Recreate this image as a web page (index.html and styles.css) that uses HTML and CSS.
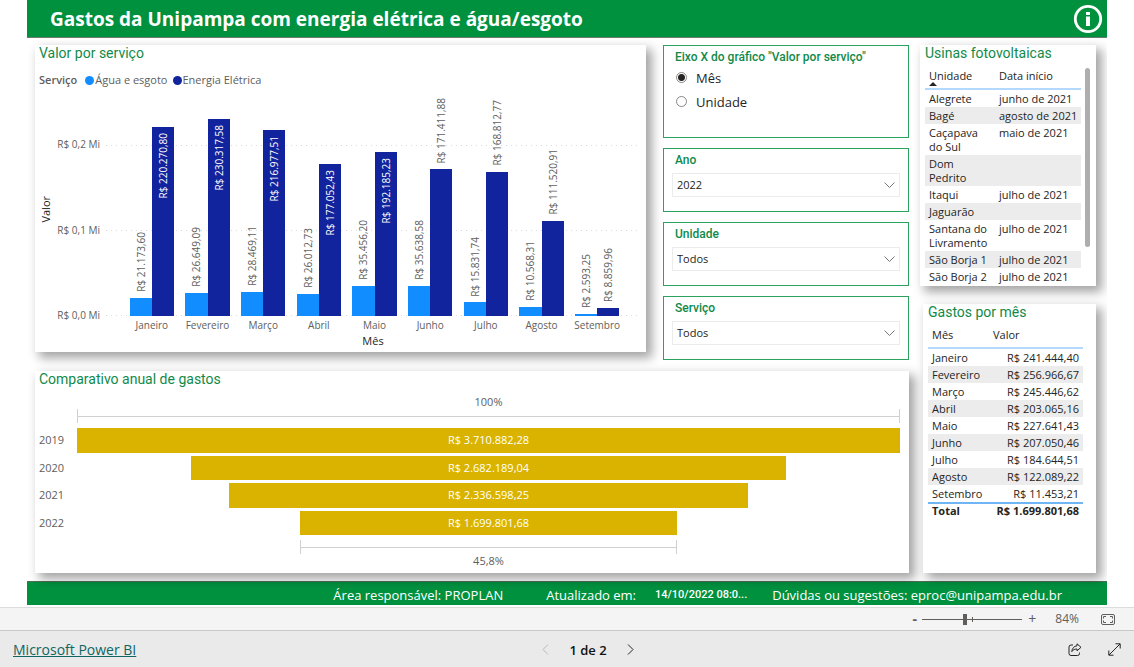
FILE: index.html
```html
<!DOCTYPE html>
<html lang="pt-BR">
<head>
<meta charset="utf-8">
<title>Gastos da Unipampa</title>
<link rel="stylesheet" href="styles.css">
</head>
<body>
<main class="report">
  <header class="report-header">
    <h1>Gastos da Unipampa com energia elétrica e água/esgoto</h1>
    <button class="info" type="button" aria-label="Informações">
      <svg width="30" height="30" viewBox="0 0 30 30"><circle cx="15" cy="15" r="12.7" fill="none" stroke="#fff" stroke-width="2.8"/><path d="M13 8h4v3h-4zM13 12.5h4V22h-4z" fill="#fff"/></svg>
    </button>
  </header>

  <div class="canvas">
    <div class="main-col">
      <div class="top-row">
        <section class="card chart-card">
          <h2>Valor por serviço</h2>
          <div class="legend"><b>Serviço</b><span class="key water">Água e esgoto</span><span class="key power">Energia Elétrica</span></div>
          <div class="chart">
            <div class="y-title"><span class="vertical">Valor</span></div>
            <div class="y-axis"><span>R$ 0,2 Mi</span><span>R$ 0,1 Mi</span><span>R$ 0,0 Mi</span></div>
            <div class="plot" id="plot"></div>
            <div class="x-axis" id="months"></div>
            <div class="x-title">Mês</div>
          </div>
        </section>

        <div class="filters">
          <fieldset class="filter axis-filter">
            <legend>Eixo X do gráfico "Valor por serviço"</legend>
            <label><input type="radio" name="eixo" checked>Mês</label>
            <label><input type="radio" name="eixo">Unidade</label>
          </fieldset>
          <div class="filter">
            <label for="ano">Ano</label>
            <div class="select"><select id="ano"><option>2022</option></select><svg width="11" height="7" viewBox="0 0 11 7"><path d="M.5.5l5 5 5-5"/></svg></div>
          </div>
          <div class="filter">
            <label for="unidade">Unidade</label>
            <div class="select"><select id="unidade"><option>Todos</option></select><svg width="11" height="7" viewBox="0 0 11 7"><path d="M.5.5l5 5 5-5"/></svg></div>
          </div>
          <div class="filter">
            <label for="servico">Serviço</label>
            <div class="select"><select id="servico"><option>Todos</option></select><svg width="11" height="7" viewBox="0 0 11 7"><path d="M.5.5l5 5 5-5"/></svg></div>
          </div>
        </div>
      </div>

      <section class="card funnel-card">
        <h2>Comparativo anual de gastos</h2>
        <div class="funnel">
          <div class="range">100%</div>
          <div class="bracket"></div>
          <ul class="years"><li>2019</li><li>2020</li><li>2021</li><li>2022</li></ul>
          <div class="bars">
            <div style="width:100%">R$ 3.710.882,28</div>
            <div style="width:72.28%">R$ 2.682.189,04</div>
            <div style="width:62.97%">R$ 2.336.598,25</div>
            <div style="width:45.8%">R$ 1.699.801,68</div>
          </div>
          <div class="bracket" style="width:45.8%"></div>
          <div class="range">45,8%</div>
        </div>
      </section>
    </div>

    <div class="side-col">
      <section class="card plants-card">
        <h2>Usinas fotovoltaicas</h2>
        <div class="scroller">
          <table class="plants">
            <thead><tr><th>Unidade<i class="sort"></i></th><th>Data início</th></tr></thead>
            <tbody>
              <tr><td>Alegrete</td><td>junho de 2021</td></tr>
              <tr><td>Bagé</td><td>agosto de 2021</td></tr>
              <tr><td>Caçapava do Sul</td><td>maio de 2021</td></tr>
              <tr><td>Dom Pedrito</td><td></td></tr>
              <tr><td>Itaqui</td><td>julho de 2021</td></tr>
              <tr><td>Jaguarão</td><td></td></tr>
              <tr><td>Santana do Livramento</td><td>julho de 2021</td></tr>
              <tr><td>São Borja 1</td><td>julho de 2021</td></tr>
              <tr><td>São Borja 2</td><td>julho de 2021</td></tr>
            </tbody>
          </table>
          <div class="thumb"></div>
        </div>
      </section>

      <section class="card months-card">
        <h2>Gastos por mês</h2>
        <table class="spend">
          <thead><tr><th>Mês</th><th>Valor</th></tr></thead>
          <tbody>
            <tr><td>Janeiro</td><td>R$ 241.444,40</td></tr>
            <tr><td>Fevereiro</td><td>R$ 256.966,67</td></tr>
            <tr><td>Março</td><td>R$ 245.446,62</td></tr>
            <tr><td>Abril</td><td>R$ 203.065,16</td></tr>
            <tr><td>Maio</td><td>R$ 227.641,43</td></tr>
            <tr><td>Junho</td><td>R$ 207.050,46</td></tr>
            <tr><td>Julho</td><td>R$ 184.644,51</td></tr>
            <tr><td>Agosto</td><td>R$ 122.089,22</td></tr>
            <tr><td>Setembro</td><td>R$ 11.453,21</td></tr>
          </tbody>
          <tfoot><tr><td>Total</td><td>R$ 1.699.801,68</td></tr></tfoot>
        </table>
      </section>
    </div>
  </div>

  <footer class="report-footer">
    <span>Área responsável: PROPLAN</span>
    <span class="updated">Atualizado em:</span>
    <b>14/10/2022 08:0...</b>
    <span>Dúvidas ou sugestões: eproc@unipampa.edu.br</span>
  </footer>
</main>

<div class="zoom-bar">
  <button class="minus" type="button" aria-label="Diminuir zoom">-</button>
  <input type="range" min="0" max="100" value="42" aria-label="Zoom">
  <button type="button" aria-label="Aumentar zoom">+</button>
  <span class="percent">84%</span>
  <button class="fit" type="button" aria-label="Ajustar à página">
    <svg width="14" height="11" viewBox="0 0 14 11"><rect x=".5" y=".5" width="13" height="10" rx="1.5"/><path d="M5 2.5H2.5V4.500M9 2.5h2.500V4.500M5 8.500H2.500V6.500M9 8.500h2.500V6.500"/></svg>
  </button>
</div>

<nav class="page-bar">
  <a href="#">Microsoft Power BI</a>
  <div class="pager">
    <button type="button" class="off" aria-label="Anterior"><svg width="7" height="11" viewBox="0 0 7 11"><path d="M6 .5l-5 5 5 5"/></svg></button>
    <span>1 de 2</span>
    <button type="button" aria-label="Próxima"><svg width="7" height="11" viewBox="0 0 7 11"><path d="M1 .5l5 5-5 5"/></svg></button>
  </div>
  <div class="tools">
    <button type="button" aria-label="Compartilhar"><svg width="14" height="13" viewBox="0 0 14 13"><path d="M5 2H3a2 2 0 0 0-2 2v6.500a2 2 0 0 0 2 2h6.500a2 2 0 0 0 2-2V9.500"/><path d="M9 .8l4 3.500-4 3.500V6C6.500 6 5 6.800 3.800 8.600 4 5.500 6 3 9 2.800z"/></svg></button>
    <button type="button" aria-label="Tela cheia"><svg width="13" height="13" viewBox="0 0 13 13"><path d="M1 12L12 1M7.500.8h4.700V5.500M.8 7.500v4.700h4.700"/></svg></button>
  </div>
</nav>
<script src="chart.js"></script>
</body>
</html>
```
FILE: styles.css
```css
* { box-sizing: border-box; }
body {
  margin: 0;
  min-height: 100vh;
  display: flex;
  flex-direction: column;
  background: #fff;
  color: #252423;
  font: 11px/14px "Open Sans", "Noto Sans", sans-serif;
}
h1, h2, ul, fieldset { margin: 0; padding: 0; }
ul { list-style: none; }
button { border: 0; padding: 0; background: none; color: inherit; font: inherit; display: flex; align-items: center; justify-content: center; }
svg { display: block; }

.report { margin: 0 27px; flex: 1; overflow: hidden; }
.report-header {
  display: flex; align-items: center; justify-content: space-between;
  height: 38px; padding: 0 4px 0 23px;
  background: #00913f; border-bottom: 1px solid #6d7a6f; color: #fff;
}
h1 { font-size: 19px; line-height: 24px; font-weight: 700; }
.canvas {
  position: relative; z-index: 1;
  display: grid; grid-template-columns: minmax(0, 1fr) 176px; gap: 11px;
  padding: 7px 11px 8px 8px;
}
.main-col, .side-col { display: flex; flex-direction: column; min-width: 0; }
.main-col { gap: 11px; }
.side-col { gap: 18px; }
.top-row { display: flex; gap: 17px; align-items: flex-start; }
.card { background: #fff; box-shadow: 5px 5px 10px 1px rgba(0, 0, 0, .36); }
h2 { font: 400 14px/16px Roboto, sans-serif; color: #118a49; }

/* column chart */
.chart-card { flex: 1; min-width: 0; padding: 0 6px 3px 4px; }
.legend { display: flex; align-items: center; margin-top: 12px; color: #605e5c; }
.legend b { font-weight: 600; margin-right: 8px; }
.key { display: flex; align-items: center; margin-right: 5px; }
.key::before { content: ""; width: 9px; height: 9px; border-radius: 50%; background: #118dff; margin-right: 1px; }
.key.power::before { background: #12239e; }
.chart {
  display: grid;
  grid-template-columns: 14px 53px minmax(0, 1fr);
  grid-template-rows: 214px 18px 15px;
  margin-top: 15px;
}
.y-title { display: flex; align-items: center; justify-content: center; }
.vertical { writing-mode: vertical-rl; transform: rotate(180deg); white-space: nowrap; }
.y-axis { display: flex; flex-direction: column; justify-content: space-between; align-items: flex-end; padding: 35px 6px 0 0; margin-bottom: -6px; font-size: 10px; color: #605e5c; }
.plot {
  display: flex; padding: 0 15px 0 18px; align-items: flex-end;
  background:
    repeating-linear-gradient(90deg, #dcdcdc 0 1px, transparent 1px 5px) 0 43px / 100% 1px no-repeat,
    repeating-linear-gradient(90deg, #dcdcdc 0 1px, transparent 1px 5px) 0 128px / 100% 1px no-repeat,
    repeating-linear-gradient(90deg, #dcdcdc 0 1px, transparent 1px 5px) 0 100% / 100% 1px no-repeat;
}
.group { flex: 1; height: 100%; display: flex; align-items: flex-end; justify-content: center; }
.bar { position: relative; width: 40%; background: #118dff; display: flex; justify-content: center; }
.bar.power { background: #12239e; }
.bar .vertical { position: absolute; bottom: 100%; margin-bottom: 6px; font-size: 10px; line-height: 12px; color: #605e5c; }
.bar .inside { bottom: auto; top: 0; margin: 6px 0 0; color: #fff; }
.x-axis { grid-column: 3; display: flex; padding: 2px 15px 0 18px; font-size: 10px; color: #605e5c; }
.x-axis span { flex: 1; display: flex; justify-content: center; }
.x-title { grid-column: 3; text-align: center; }

/* slicers */
.filters { width: 246px; display: flex; flex-direction: column; gap: 10px; }
.filter { border: 1px solid #2ca25f; padding: 4px 8px 14px; min-width: 0; }
.filter > label, .filter legend { display: block; float: left; width: 100%; padding: 0 3px; font: 500 12px/15px Roboto, sans-serif; color: #118a49; }
.select { clear: both; position: relative; padding-top: 5px; }
.select select { appearance: none; width: 100%; height: 24px; border: 1px solid #ececec; border-radius: 0; background: #fff; padding: 0 4px; font: inherit; color: #252423; display: block; }
.select svg { position: absolute; right: 5px; bottom: 8px; }
.select path { fill: none; stroke: #7a7876; }
.axis-filter { padding: 4px 8px 23px; }
.axis-filter legend { margin-bottom: 1px; }
.filter.axis-filter label { float: none; clear: both; display: flex; align-items: center; gap: 8px; padding: 0; font: 13px/24px "Open Sans", sans-serif; color: #252423; }
.axis-filter input { appearance: none; width: 11px; height: 11px; margin: 0 1px 2px 4px; border: 1px solid #8a8886; border-radius: 50%; background: #fff; }
.axis-filter input:checked { background: radial-gradient(circle, #252423 3px, #fff 4px); }

/* funnel */
.funnel-card { padding: 0 9px 5px 4px; }
.funnel {
  display: grid; grid-template-columns: 38px minmax(0, 1fr);
  grid-template-rows: 14px 14px 117px 14px 14px;
  justify-items: center; margin-top: 8px; color: #605e5c;
}
.range, .bracket { grid-column: 2; }
.range { text-align: center; }
.bracket { width: 100%; border: solid #d2d0ce; border-width: 0 1px; background: linear-gradient(#d2d0ce, #d2d0ce) 0 50% / 100% 1px no-repeat; }
.years { justify-self: start; display: flex; flex-direction: column; gap: 3px; padding: 5px 0; }
.years li { flex: 1; display: flex; align-items: center; }
.bars { width: 100%; display: flex; flex-direction: column; align-items: center; gap: 3px; padding: 5px 0; }
.bars div { flex: 1; display: flex; align-items: center; justify-content: center; background: #d9b300; color: #fff; }

/* tables */
table { border-collapse: collapse; table-layout: fixed; }
th { padding: 3px 4px 0; text-align: left; vertical-align: top; font-weight: 400; }
td { padding: 2px 4px 1px; text-align: left; vertical-align: top; }
tbody tr:nth-child(even) { background: #ececec; }
.plants-card { height: 241px; padding-left: 5px; }
.scroller { display: flex; align-items: flex-start; gap: 4px; padding-top: 5px; }
.plants { width: 156px; }
.plants th { height: 23px; line-height: 13px; border-bottom: 2px solid #b3d9ff; }
.plants th:first-child { width: 70px; }
.sort { display: block; width: 0; border: 4px solid transparent; border-top: 0; border-bottom: 4px solid #252423; }
.plants td:last-child { white-space: nowrap; }
.thumb { width: 5px; height: 179px; margin-top: 2px; border-radius: 3px; background: #b0aeac; }
.months-card { flex: 1; margin-left: 3px; padding-left: 5px; }
.spend { width: 155px; margin-top: 5px; }
.spend th { height: 23px; border-bottom: 2px solid #b3d9ff; }
.spend th:first-child { width: 61px; }
.spend td:last-child { text-align: right; white-space: nowrap; }
.spend tfoot td { padding-top: 0; border-top: 2px solid #70b5f5; font-weight: 700; }

.report-footer {
  display: flex; justify-content: flex-end; align-items: center;
  height: 24px; padding: 3px 45px 0 0;
  border-top: 1px solid #4f6f58; background: #00913f; color: #fff;
  font-size: 13px; line-height: 18px;
}
.report-footer .updated { margin: 0 19px 0 43px; }
.report-footer b { margin-right: 25px; font: 500 11px/18px Roboto, sans-serif; }

.zoom-bar {
  display: flex; align-items: center; justify-content: flex-end;
  height: 23px; padding-right: 19px;
  background: #f4f4f4; border-top: 1px solid #dcdcdc; color: #605e5c; font-size: 12px;
}
.zoom-bar button { width: 10px; font-size: 14px; }
.zoom-bar .minus { width: 5px; font-weight: 700; }
.zoom-bar .percent { margin: 0 22px 0 18px; }
.zoom-bar .fit { width: 14px; }
.fit svg { fill: none; stroke: #605e5c; }
.zoom-bar input {
  appearance: none; width: 100px; height: 12px; margin: 0 5px;
  background:
    linear-gradient(#605e5c, #605e5c) 50% 50% / 1px 5px no-repeat,
    linear-gradient(#605e5c, #605e5c) 0 50% / 100% 1px no-repeat;
}
.zoom-bar input::-webkit-slider-thumb { appearance: none; width: 4px; height: 11px; background: #605e5c; }

.page-bar {
  display: grid; grid-template-columns: 1fr auto 1fr; align-items: center;
  height: 37px; padding: 1px 13px 0 13px;
  background: #eaeaea; border-top: 1px solid #c8c8c8;
}
.page-bar a { color: #0f6663; font-size: 14px; line-height: 20px; justify-self: start; }
.page-bar svg { fill: none; stroke: #252423; }
.page-bar .off svg { stroke: #b8b8b8; }
.pager { display: flex; align-items: center; gap: 20px; margin-left: 42px; font-size: 13px; font-weight: 600; color: #111; }
.tools { justify-self: end; display: flex; gap: 26px; }
```
FILE: chart.js
```js
// [month, water label, power label, power label drawn inside the bar]
const rows = [
  ["Janeiro", "21.173,60", "220.270,80", true],
  ["Fevereiro", "26.649,09", "230.317,58", true],
  ["Março", "28.469,11", "216.977,51", true],
  ["Abril", "26.012,73", "177.052,43", true],
  ["Maio", "35.456,20", "192.185,23", true],
  ["Junho", "35.638,58", "171.411,88", false],
  ["Julho", "15.831,74", "168.812,77", false],
  ["Agosto", "10.568,31", "111.520,91", false],
  ["Setembro", "2.593,25", "8.859,96", false]
];
const MAX = 250000;
const bar = (text, kind, inside) => {
  const value = parseFloat(text.replace(".", "").replace(",", "."));
  return `<div class="bar ${kind}" style="height:${value / MAX * 100}%"><span class="vertical${inside ? " inside" : ""}">R$ ${text}</span></div>`;
};
document.getElementById("plot").innerHTML = rows.map(r =>
  `<div class="group">${bar(r[1], "water", false)}${bar(r[2], "power", r[3])}</div>`).join("");
document.getElementById("months").innerHTML = rows.map(r => `<span>${r[0]}</span>`).join("");
```
